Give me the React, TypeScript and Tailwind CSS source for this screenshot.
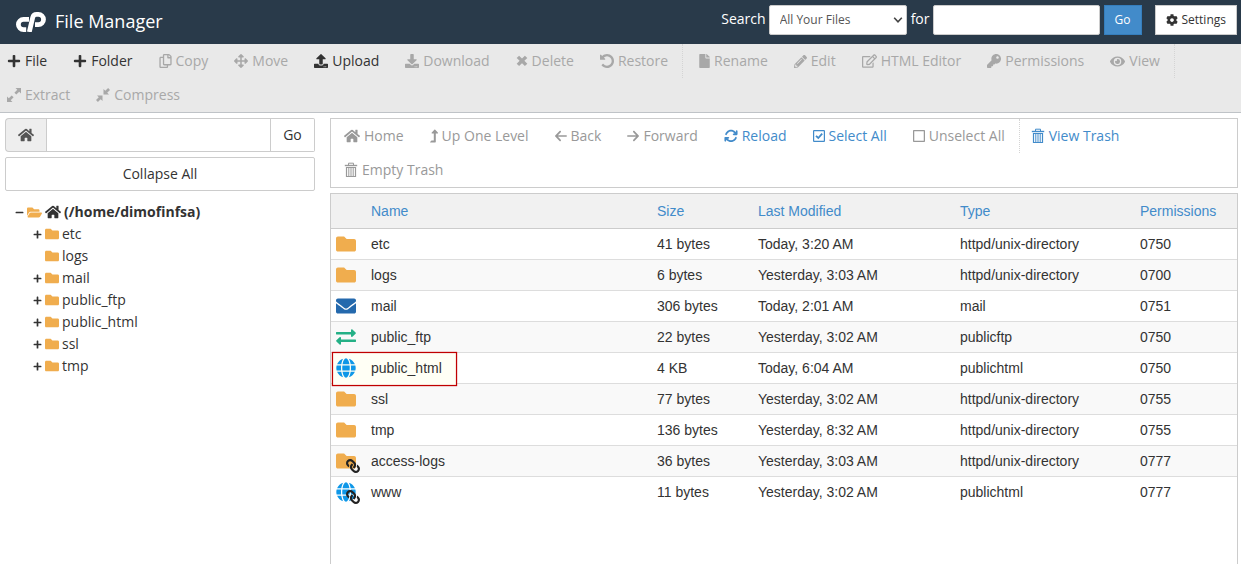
import { useState } from "react";
import type { ComponentType, ReactNode } from "react";
import {
  FaPlus,
  FaMinus,
  FaRegCopy,
  FaArrowsAlt,
  FaUpload,
  FaDownload,
  FaFile,
  FaPencilAlt,
  FaRegEdit,
  FaKey,
  FaEye,
  FaHome,
  FaLevelUpAlt,
  FaCog,
  FaFolder,
  FaFolderOpen,
  FaEnvelope,
  FaGlobe,
  FaLink,
} from "react-icons/fa";
import { FaArrowLeft, FaArrowRight, FaArrowsRotate } from "react-icons/fa6";

type IconProps = { className?: string };
type Icon = ComponentType<IconProps>;

function Logo({ className }: IconProps) {
  return (
    <svg viewBox="0 0 30 20" fill="none" stroke="currentColor" strokeWidth="4.8" className={className} role="img" aria-label="cPanel">
      <path d="M13 7.400H7.500a5.100 5.100 0 0 0 0 10.200H10.200" />
      <path d="M13.300 20 16.700 5.500A4 4 0 0 1 20.600 2.400H22.400a5.100 5.100 0 0 1 0 10.200H19" />
    </svg>
  );
}

function CrossIcon({ className }: IconProps) {
  return (
    <svg viewBox="0 0 14 14" fill="currentColor" className={className} aria-hidden="true">
      <path d="M3.6.8 7 4.100 10.400.8l2.800 2.600L9.800 6.800l3.400 3.300-2.800 2.700L7 9.500l-3.400 3.300-2.800-2.700 3.400-3.300L.8 3.400z" />
    </svg>
  );
}

function UndoIcon({ className }: IconProps) {
  return (
    <svg viewBox="0 128 1536 1536" fill="currentColor" className={className} aria-hidden="true">
      <path d="M1536 896q0 156-61 298t-164 245-245 164-298 61q-172 0-327-72.500t-264-204.500q-7-10-6.500-22.500t8.500-20.500l137-138q10-9 25-9 16 2 23 12 73 95 179 147t225 52q104 0 198.500-40.500t163.500-109.500 109.500-163.500 40.500-198.500-40.500-198.500-109.500-163.500-163.500-109.500-198.500-40.500q-98 0-188 35.500t-160 101.500l137 138q31 30 14 69-17 40-59 40H64q-26 0-45-19t-19-45V256q0-42 40-59 39-17 69 14l130 129q107-101 244.500-156.500T768 128q156 0 298 61t245 164 164 245 61 298z" />
    </svg>
  );
}

function ExtractIcon({ className }: IconProps) {
  return (
    <svg viewBox="0 0 14 14" fill="currentColor" className={className} aria-hidden="true">
      <path d="M8.500 0H14v5.500l-1.800-1.800-2.900 2.900-1.900-1.900 2.900-2.900z" />
      <path d="M5.500 14H0V8.500l1.800 1.800 2.900-2.900 1.900 1.900-2.900 2.900z" />
    </svg>
  );
}

function CompressIcon({ className }: IconProps) {
  return (
    <svg viewBox="0 0 14 14" fill="currentColor" className={className} aria-hidden="true">
      <path d="M7.500 1v5.500H13l-1.800-1.800L14 1.900 12.100 0 9.300 2.800z" />
      <path d="M6.500 13V7.500H1l1.800 1.800L0 12.100 1.900 14l2.800-2.800z" />
    </svg>
  );
}

function CheckedBoxIcon({ className }: IconProps) {
  return (
    <svg viewBox="0 0 12 12" fill="none" stroke="currentColor" className={className} aria-hidden="true">
      <rect x=".6" y=".6" width="10.800" height="10.800" rx=".5" strokeWidth="1.200" />
      <path d="M3 5.800 5.300 8 9.200 3.700" strokeWidth="1.800" />
    </svg>
  );
}

function EmptyBoxIcon({ className }: IconProps) {
  return (
    <svg viewBox="0 0 12 12" fill="none" stroke="currentColor" className={className} aria-hidden="true">
      <rect x=".6" y=".6" width="10.800" height="10.800" rx=".5" strokeWidth="1.300" />
    </svg>
  );
}

function TrashIcon({ className }: IconProps) {
  return (
    <svg viewBox="0 0 14 16" fill="none" stroke="currentColor" className={className} aria-hidden="true">
      <path d="M4.500 3V1.200h5V3" strokeWidth="1" />
      <path d="M.8 3.500h12.400" strokeWidth="1.400" />
      <path d="M2.500 5.500h9v9h-9z" strokeWidth="1.200" />
      <path d="M4.800 6v8M7 6v8M9.200 6v8" strokeWidth="1" />
    </svg>
  );
}

function TransferIcon({ className }: IconProps) {
  return (
    <svg viewBox="0 0 20 16" fill="currentColor" className={className} aria-hidden="true">
      <path d="M.5 3H15V1.200c0-.9.8-1.200 1.400-.6l3.200 3c.4.4.4.8 0 1.200l-3.200 3c-.6.6-1.400.2-1.400-.7V5.400H.5c-.3 0-.5-.2-.5-.5V3.500C0 3.200.2 3 .5 3z" />
      <path d="M19.500 10.600H5V8.800c0-.9-.8-1.200-1.400-.6l-3.200 3c-.4.4-.4.8 0 1.200l3.200 3c.6.6 1.400.2 1.400-.7V13h14.500c.3 0 .5-.2.5-.5v-1.400c0-.3-.2-.5-.5-.5z" />
    </svg>
  );
}

type Tool = {
  label: string;
  icon: Icon;
  enabled?: boolean;
  endsGroup?: boolean;
  startsGroup?: boolean;
  size?: string;
};

const fileTools: Tool[] = [
  { label: "File", icon: FaPlus, enabled: true },
  { label: "Folder", icon: FaPlus, enabled: true },
  { label: "Copy", icon: FaRegCopy, size: "w-[13px] h-3.5" },
  { label: "Move", icon: FaArrowsAlt },
  { label: "Upload", icon: FaUpload, enabled: true },
  { label: "Download", icon: FaDownload },
  { label: "Delete", icon: CrossIcon, size: "w-3 h-3.5" },
  { label: "Restore", icon: UndoIcon, endsGroup: true },
  { label: "Rename", icon: FaFile, startsGroup: true, size: "w-[11px] h-3.5" },
  { label: "Edit", icon: FaPencilAlt, size: "w-[13px] h-[13px]" },
  { label: "HTML Editor", icon: FaRegEdit, size: "w-[15px] h-3.5" },
  { label: "Permissions", icon: FaKey },
  { label: "View", icon: FaEye, endsGroup: true, size: "w-[15px] h-[15px]" },
  { label: "Extract", icon: ExtractIcon },
  { label: "Compress", icon: CompressIcon },
];

const navTools: Tool[] = [
  { label: "Home", icon: FaHome, size: "w-4 h-4" },
  { label: "Up One Level", icon: FaLevelUpAlt, size: "w-2 h-3.5" },
  { label: "Back", icon: FaArrowLeft, size: "w-3 h-3.5" },
  { label: "Forward", icon: FaArrowRight, size: "w-3 h-3.5" },
  { label: "Reload", icon: FaArrowsRotate, enabled: true },
  { label: "Select All", icon: CheckedBoxIcon, enabled: true, size: "w-3 h-3" },
  { label: "Unselect All", icon: EmptyBoxIcon, endsGroup: true, size: "w-3 h-3" },
  { label: "View Trash", icon: TrashIcon, enabled: true, size: "w-3.5 h-4" },
  { label: "Empty Trash", icon: TrashIcon, size: "w-3.5 h-4" },
];

function Toolbar({ tools, label, tone }: { tools: Tool[]; label: string; tone: "dark" | "blue" }) {
  const active = tone === "dark" ? "text-[#333333]" : "text-[#428bca]";
  const muted = tone === "dark" ? "text-[#a8a8a8]" : "text-[#999999]";
  return (
    <div role="toolbar" aria-label={label} className="flex flex-wrap">
      {tools.map(({ label: text, icon: ToolIcon, enabled, endsGroup, startsGroup, size }) => (
        <button
          key={text}
          type="button"
          disabled={!enabled}
          className={`mr-1 flex h-[34px] items-center gap-1 border-r border-dotted pr-3.5 ${
            startsGroup ? "pl-3" : "pl-[7px]"
          } ${endsGroup ? "border-r-[#d4d4d4]" : "border-transparent"} ${enabled ? active : muted}`}
        >
          <ToolIcon className={`shrink-0 ${size ?? "h-3.5 w-3.5"}`} />
          {text}
        </button>
      ))}
    </div>
  );
}

const tree = [
  { name: "etc", expandable: true },
  { name: "logs", expandable: false },
  { name: "mail", expandable: true },
  { name: "public_ftp", expandable: true },
  { name: "public_html", expandable: true },
  { name: "ssl", expandable: true },
  { name: "tmp", expandable: true },
];

const folder = <FaFolder className="h-5 w-5 text-[#f0ad4e]" />;
const globe = <FaGlobe className="h-5 w-5 text-[#0e97e8]" />;

function Linked({ children }: { children: ReactNode }) {
  return (
    <span className="relative block">
      {children}
      <FaLink className="absolute top-2 left-2.5 h-3.5 w-3.5 -scale-x-100 text-[#222222]" />
    </span>
  );
}

type Entry = {
  name: string;
  size: string;
  modified: string;
  type: string;
  mode: string;
  icon: ReactNode;
  marked?: boolean;
};

const entries: Entry[] = [
  { name: "etc", size: "41 bytes", modified: "Today, 3:20 AM", type: "httpd/unix-directory", mode: "0750", icon: folder },
  { name: "logs", size: "6 bytes", modified: "Yesterday, 3:03 AM", type: "httpd/unix-directory", mode: "0700", icon: folder },
  { name: "mail", size: "306 bytes", modified: "Today, 2:01 AM", type: "mail", mode: "0751", icon: <FaEnvelope className="h-5 w-5 text-[#2469ad]" /> },
  { name: "public_ftp", size: "22 bytes", modified: "Yesterday, 3:02 AM", type: "publicftp", mode: "0750", icon: <TransferIcon className="h-4 w-5 text-[#24b086]" /> },
  { name: "public_html", size: "4 KB", modified: "Today, 6:04 AM", type: "publichtml", mode: "0750", icon: globe, marked: true },
  { name: "ssl", size: "77 bytes", modified: "Yesterday, 3:02 AM", type: "httpd/unix-directory", mode: "0755", icon: folder },
  { name: "tmp", size: "136 bytes", modified: "Yesterday, 8:32 AM", type: "httpd/unix-directory", mode: "0755", icon: folder },
  { name: "access-logs", size: "36 bytes", modified: "Yesterday, 3:03 AM", type: "httpd/unix-directory", mode: "0777", icon: <Linked>{folder}</Linked> },
  { name: "www", size: "11 bytes", modified: "Yesterday, 3:02 AM", type: "publichtml", mode: "0777", icon: <Linked>{globe}</Linked> },
];

function Header() {
  return (
    <header className="flex h-11 items-start bg-[#293a4a] pt-[5px] pr-1 pl-4 text-white">
      <div className="flex h-8 items-center gap-[9px]">
        <Logo className="mt-0.5 h-5 w-[30px]" />
        <h1 className="text-lg leading-8">File Manager</h1>
      </div>
      <form className="ml-auto flex items-center" onSubmit={(e) => e.preventDefault()}>
        <label htmlFor="scope" className="mr-[3px] pb-0.5">
          Search
        </label>
        <div className="relative">
          <select
            id="scope"
            className="block h-[30px] w-[138px] appearance-none rounded-[2px] border border-[#cccccc] bg-white px-2.5 text-xs text-[#555555]"
          >
            <option>All Your Files</option>
          </select>
          <svg
            viewBox="0 0 10 6"
            className="pointer-events-none absolute top-3 right-1 h-1.5 w-2.5 text-[#444444]"
            fill="none"
            stroke="currentColor"
            strokeWidth="1.6"
            aria-hidden="true"
          >
            <path d="M1.200.8 5 4.800 8.800.8" />
          </svg>
        </div>
        <label htmlFor="query" className="mr-[3px] ml-1 pb-0.5">
          for
        </label>
        <input
          id="query"
          type="text"
          className="h-[30px] w-[167px] rounded-[2px] border border-[#cccccc] bg-white px-2 text-xs text-[#555555]"
        />
        <button
          type="submit"
          className="ml-1 h-[30px] w-[38px] border border-[#357ebd] bg-[#428bca] text-xs"
        >
          Go
        </button>
      </form>
      <button
        type="button"
        className="ml-[13px] flex h-[30px] items-center gap-1 border border-[#cccccc] bg-white px-2.5 text-xs text-[#333333]"
      >
        <FaCog className="h-3 w-3" />
        Settings
      </button>
    </header>
  );
}

function Sidebar() {
  const [path, setPath] = useState("");
  return (
    <aside className="w-[310px] shrink-0">
      <form className="flex h-[34px]" onSubmit={(e) => e.preventDefault()}>
        <button
          type="button"
          aria-label="Home directory"
          className="flex w-[41px] items-center justify-center rounded-l border border-r-0 border-[#cccccc] bg-[#eeeeee] text-[#555555]"
        >
          <FaHome className="h-4 w-4" />
        </button>
        <input
          type="text"
          aria-label="Path"
          value={path}
          onChange={(e) => setPath(e.target.value)}
          className="min-w-0 flex-1 border border-[#cccccc] px-3"
        />
        <button type="submit" className="w-11 rounded-r-[2px] border border-l-0 border-[#cccccc]">
          Go
        </button>
      </form>
      <button type="button" className="mt-[5px] h-[34px] w-full rounded-[2px] border border-[#cccccc]">
        Collapse All
      </button>
      <nav aria-label="Folders" className="mt-2.5 pl-2.5">
        <a href="#home" className="flex h-[22px] items-center font-bold">
          <FaMinus className="mr-[3px] h-[9px] w-[9px]" />
          <FaFolderOpen className="mr-[3px] h-[15px] w-[15px] text-[#f0ad4e]" />
          <FaHome className="mr-[3px] h-4 w-4" />
          (/home/dimofinfsa)
        </a>
        <ul className="pl-[18px]">
          {tree.map((node) => (
            <li key={node.name}>
              <a href={`#${node.name}`} className="flex h-[22px] items-center">
                <FaPlus className={`mr-[3px] h-[9px] w-[9px] ${node.expandable ? "" : "invisible"}`} />
                <FaFolder className="mr-[3px] h-3.5 w-3.5 text-[#f0ad4e]" />
                {node.name}
              </a>
            </li>
          ))}
        </ul>
      </nav>
    </aside>
  );
}

function FileTable() {
  return (
    <div className="mt-[5px] flex-1 border border-b-0 border-[#cccccc] font-['Liberation_Sans',Arial,sans-serif]">
      <table className="w-full table-fixed border-collapse text-left">
        <colgroup>
          <col className="w-9" />
          <col />
          <col className="w-[101px]" />
          <col className="w-[202px]" />
          <col className="w-[180px]" />
          <col className="w-[101px]" />
        </colgroup>
        <thead>
          <tr className="h-[34px] border-b border-[#cccccc] bg-[#f1f1f1] text-[#428bca]">
            <th aria-label="Kind" />
            <th className="px-1 font-normal">Name</th>
            <th className="px-1 font-normal">Size</th>
            <th className="px-1 font-normal">Last Modified</th>
            <th className="px-1 font-normal">Type</th>
            <th className="px-1 font-normal">Permissions</th>
          </tr>
        </thead>
        <tbody>
          {entries.map((entry) => (
            <tr
              key={entry.name}
              className="h-[31px] border-b border-[#dddddd] last:border-b-0 even:bg-[#f9f9f9]"
            >
              <td className="relative py-0 pl-[5px]">
                {entry.marked && (
                  <span className="absolute -top-px left-px h-[34px] w-[125px] border border-[#c00000] bg-[#fffff5] shadow-[0_0_1px_#c00000,inset_0_0_1px_#c00000]" />
                )}
                <span className="relative block">{entry.icon}</span>
              </td>
              <td className="px-1 py-0">
                <span className="relative">{entry.name}</span>
              </td>
              <td className="px-1 py-0">{entry.size}</td>
              <td className="px-1 py-0">{entry.modified}</td>
              <td className="px-1 py-0">{entry.type}</td>
              <td className="px-1 py-0">{entry.mode}</td>
            </tr>
          ))}
        </tbody>
      </table>
    </div>
  );
}

export default function App() {
  return (
    <div className="flex min-h-screen flex-col bg-white font-['Open_Sans','Noto_Sans',sans-serif] text-sm text-[#333333]">
      <Header />
      <div className="border-b border-[#bfc3c7] bg-[#e9e9e9]">
        <Toolbar tools={fileTools} label="File actions" tone="dark" />
      </div>
      <div className="flex flex-1 gap-[15px] pt-[5px] pr-[3px] pl-[5px]">
        <Sidebar />
        <main className="flex min-w-0 flex-1 flex-col">
          <div className="border border-[#cccccc] pl-1.5">
            <Toolbar tools={navTools} label="Navigation" tone="blue" />
          </div>
          <FileTable />
        </main>
      </div>
    </div>
  );
}
